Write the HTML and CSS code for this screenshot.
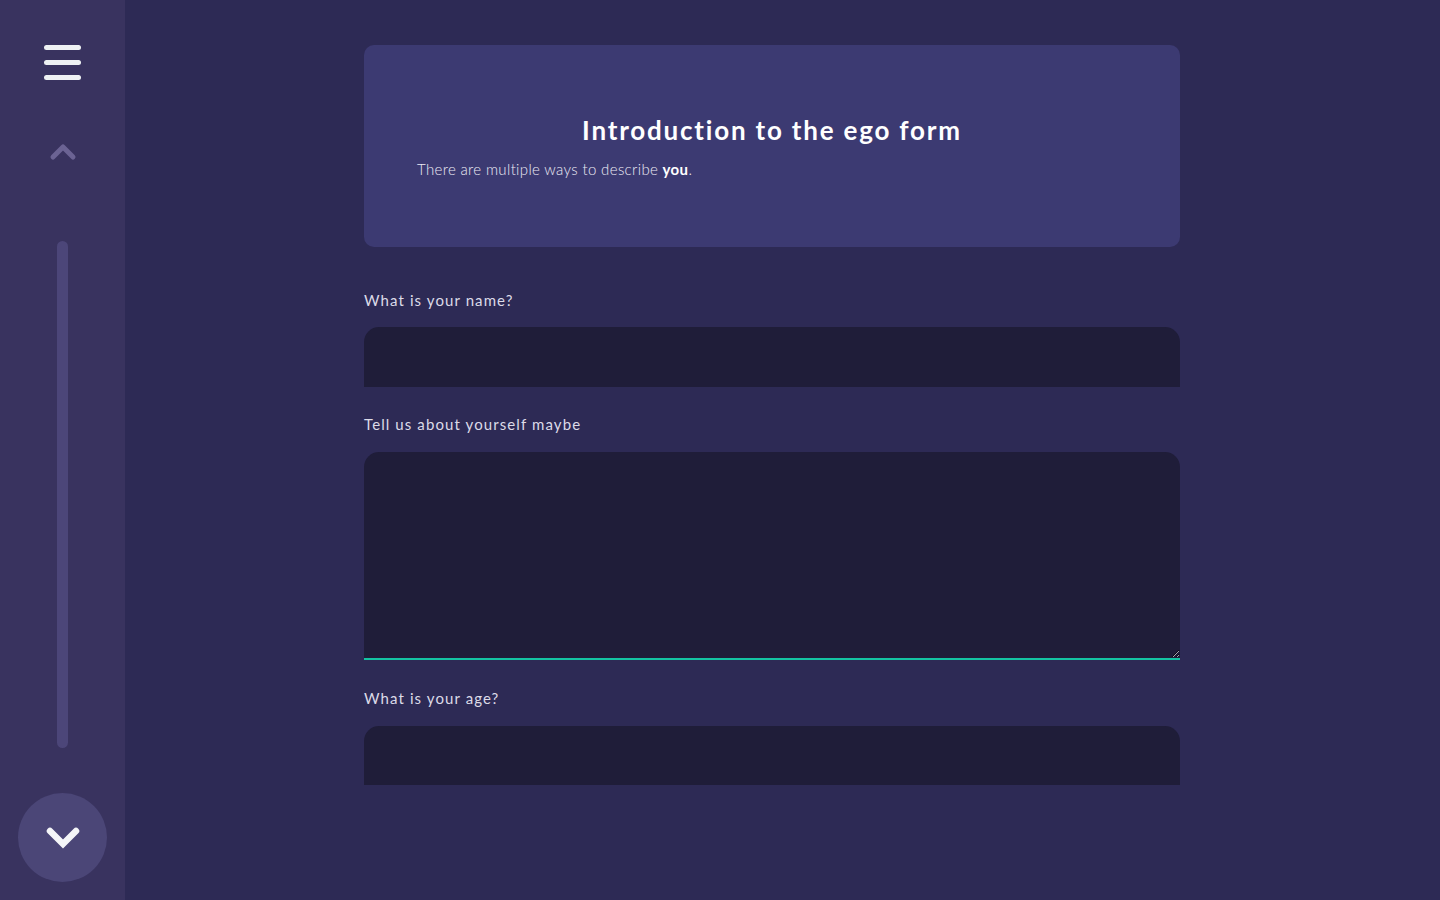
FILE: index.html
```html
<!DOCTYPE html>
<html lang="en">
<head>
<meta charset="utf-8">
<title>Ego form</title>
<link rel="stylesheet" href="styles.css">
</head>
<body>
<div class="app">
  <aside class="sidebar">
    <button class="menu-btn" aria-label="Menu">
      <span></span><span></span><span></span>
    </button>
    <button class="up-btn" aria-label="Previous">
      <svg width="28" height="20" viewBox="0 0 28 20"><path d="M4 15 L14 5 L24 15" fill="none" stroke="#6b6393" stroke-width="5" stroke-linecap="round" stroke-linejoin="round"/></svg>
    </button>
    <div class="track"></div>
    <button class="down-btn" aria-label="Next">
      <svg width="36" height="26" viewBox="0 0 36 26"><path d="M5 6 L18 19 L31 6" fill="none" stroke="#f4f5f8" stroke-width="6.5" stroke-linecap="round" stroke-linejoin="miter"/></svg>
    </button>
  </aside>
  <main class="main">
    <div class="form">
      <section class="intro">
        <h1>Introduction to the ego form</h1>
        <p>There are multiple ways to describe <b>you</b>.</p>
      </section>
      <label class="field">
        <span class="label">What is your name?</span>
        <input class="input" type="text">
      </label>
      <label class="field">
        <span class="label">Tell us about yourself maybe</span>
        <textarea class="input textarea"></textarea>
      </label>
      <label class="field">
        <span class="label">What is your age?</span>
        <input class="input last" type="text">
      </label>
    </div>
  </main>
</div>
</body>
</html>
```
FILE: styles.css
```css
* { box-sizing: border-box; }
html, body { margin: 0; height: 100%; }
body {
  background: #2d2a55;
  font-family: "Lato", "Open Sans", sans-serif;
  color: #fff;
  overflow: hidden;
}
.app { display: flex; height: 900px; }
.sidebar {
  width: 125px;
  flex: none;
  background: #39335f;
  display: flex;
  flex-direction: column;
  align-items: center;
  padding-top: 45px;
}
button { border: 0; background: none; padding: 0; cursor: pointer; }
.menu-btn {
  width: 37px;
  height: 35px;
  display: flex;
  flex-direction: column;
  justify-content: space-between;
}
.menu-btn span {
  display: block;
  height: 5px;
  border-radius: 3px;
  background: #eef1f3;
}
.up-btn { margin-top: 62px; width: 28px; height: 20px; display: flex; }
.track {
  margin-top: 79px;
  width: 11px;
  height: 507px;
  border-radius: 6px;
  background: #4c4679;
}
.down-btn {
  margin-top: 45px;
  width: 89px;
  height: 89px;
  border-radius: 50%;
  background: #4b4677;
  display: flex;
  align-items: center;
  justify-content: center;
}
.main { flex: 1; display: flex; justify-content: flex-start; padding-left: 239px; padding-top: 45px; }
.form { width: 816px; display: flex; flex-direction: column; }
.intro {
  background: #3c3a72;
  border-radius: 10px;
  height: 202px;
  padding: 70px 53px 0;
}
.intro h1 {
  margin: 0;
  text-align: center;
  font-size: 26px;
  font-weight: 700;
  letter-spacing: 1.8px;
  line-height: 30px;
}
.intro p {
  margin: 15px 0 0;
  font-size: 15px;
  font-weight: 300;
  color: #eceaf5;
  letter-spacing: 0.35px;
}
.intro p b { font-weight: 700; color: #fff; }
.field { display: flex; flex-direction: column; }
.label {
  margin-top: 43px;
  font-size: 15px;
  font-weight: 400;
  letter-spacing: 1.1px;
  color: #dcdbe8;
  line-height: 20px;
  height: 20px;
}
.input {
  margin-top: 17px;
  height: 60px;
  border: 0;
  border-radius: 15px 15px 0 0;
  background: #1f1d39;
  color: #fff;
  font: inherit;
  outline: none;
  padding: 0 16px;
}
.textarea {
  margin-top: 18px;
  height: 208px;
  border-bottom: 2px solid #14c3a2;
  resize: vertical;
  padding: 16px;
}
.input.last { margin-top: 18px; height: 59px; }
.field:nth-of-type(2) .label { margin-top: 27px; }
.field:nth-of-type(3) .label { margin-top: 28px; }
```
